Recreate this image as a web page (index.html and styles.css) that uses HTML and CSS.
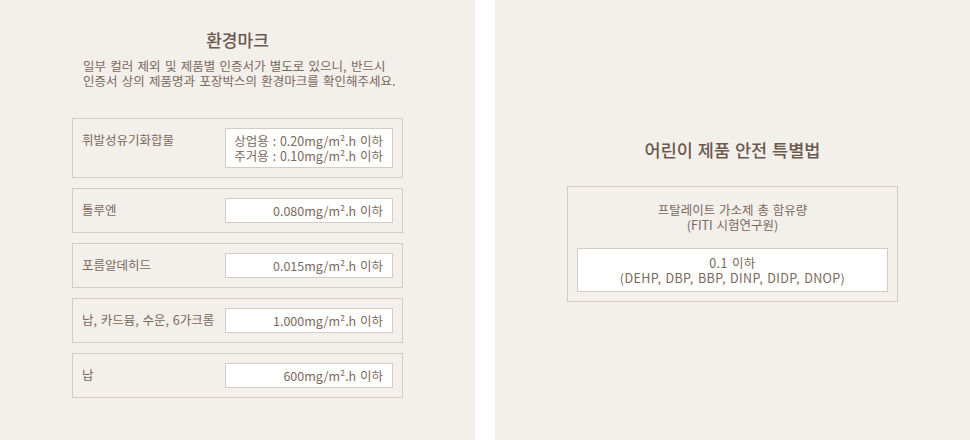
FILE: index.html
```html
<!DOCTYPE html>
<html>

<head>
  <title>환경마크</title>
  <link rel="stylesheet" href="styles.css">
</head>

<body>
  <div class="panel panel-left">
    <h4 class="title">환경마크</h4>
    <p class="desc">일부 컬러 제외 및 제품별 인증서가 별도로 있으니, 반드시<br>인증서 상의 제품명과 포장박스의 환경마크를 확인해주세요.</p>
    <div class="spec-list">
      <div class="spec">
        <div class="spec-label">휘발성유기화합물</div>
        <div class="spec-value">상업용 : 0.20mg/m².h 이하<br>주거용 : 0.10mg/m².h 이하</div>
      </div>
      <div class="spec">
        <div class="spec-label">톨루엔</div>
        <div class="spec-value">0.080mg/m².h 이하</div>
      </div>
      <div class="spec">
        <div class="spec-label">포름알데히드</div>
        <div class="spec-value">0.015mg/m².h 이하</div>
      </div>
      <div class="spec">
        <div class="spec-label">납, 카드뮴, 수운, 6가크롬</div>
        <div class="spec-value">1.000mg/m².h 이하</div>
      </div>
      <div class="spec">
        <div class="spec-label">납</div>
        <div class="spec-value">600mg/m².h 이하</div>
      </div>
    </div>
  </div>

  <div class="panel panel-right">
    <h4 class="title title-lg">어린이 제품 안전 특별법</h4>
    <div class="law-box">
      <p class="law-head">프탈레이트 가소제 총 함유량<br>(FITI 시험연구원)</p>
      <div class="law-value">0.1 이하<br>(DEHP, DBP, BBP, DINP, DIDP, DNOP)</div>
    </div>
  </div>
</body>

</html>
```

FILE: styles.css
```css
body {
  margin: 0;
  background-color: #fff;
  font-family: "Noto Sans CJK KR", "Noto Sans", sans-serif;
  font-size: 12.5px;
  word-spacing: 1px;
  color: #7a685d;
  display: flex;
  gap: 20px;
}

.panel {
  width: 475px;
  height: 440px;
  box-sizing: border-box;
  padding: 0 72px;
  background-color: #f3efeb;
}

.title {
  margin: 0;
  font-size: 17px;
  font-weight: 500;
  line-height: 22px;
  text-align: center;
  color: #6b594e;
}

.panel-left {
  padding-top: 29px;
}

.desc {
  margin: 7px 0 30px;
  padding-left: 11px;
  line-height: 15px;
  word-spacing: 1.5px;
}

.spec-list {
  display: flex;
  flex-direction: column;
  gap: 10px;
}

.spec {
  display: flex;
  align-items: flex-start;
  padding: 9px;
  border: 1px solid #d5cbc4;
}

.spec-label {
  flex: 1;
  line-height: 24px;
  white-space: nowrap;
}

.spec-value {
  width: 168px;
  box-sizing: border-box;
  padding: 4px 9px 4px 0;
  line-height: 15px;
  text-align: right;
  background-color: #fff;
  border: 1px solid #d5cbc4;
}

.panel-right {
  display: flex;
  flex-direction: column;
  justify-content: center;
}

.title-lg {
  font-size: 17.5px;
  line-height: 24px;
  margin-bottom: 24px;
}

.law-box {
  padding: 15px 9px 9px;
  border: 1px solid #d5cbc4;
  text-align: center;
}

.law-head {
  margin: 0 0 16px;
  line-height: 15px;
}

.law-value {
  padding: 6px 0;
  line-height: 15px;
  letter-spacing: .4px;
  background-color: #fff;
  border: 1px solid #d5cbc4;
}
```
